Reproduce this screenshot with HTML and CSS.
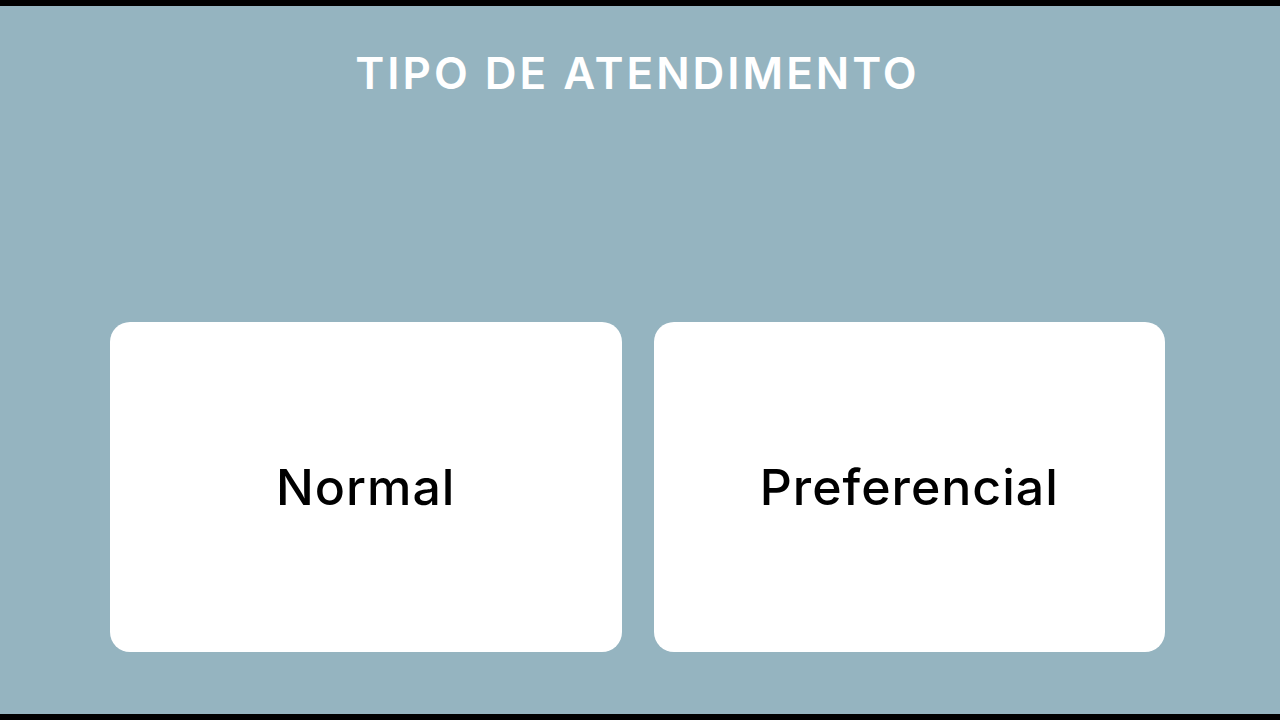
FILE: index.html
```html
<!DOCTYPE html>
<html lang="pt-BR">
<head>
<meta charset="utf-8">
<title>Tipo de atendimento</title>
<link rel="stylesheet" href="styles.css">
</head>
<body>
  <main class="screen">
    <h1 class="screen-title">TIPO DE ATENDIMENTO</h1>
    <div class="options">
      <button class="option-card" type="button">Normal</button>
      <button class="option-card" type="button">Preferencial</button>
    </div>
  </main>
</body>
</html>
```
FILE: styles.css
```css
* {
  box-sizing: border-box;
}

html,
body {
  margin: 0;
  height: 100%;
}

body {
  background: #000;
  padding: 6px 0;
  font-family: "Inter", "Noto Sans", sans-serif;
}

.screen {
  height: 100%;
  background: #95b4c0;
  display: flex;
  flex-direction: column;
  padding: 0 115px 62px 110px;
}

.screen-title {
  margin: 0;
  padding-top: 41px;
  text-align: center;
  color: #fff;
  font-size: 44px;
  font-weight: 600;
  line-height: 52px;
  letter-spacing: 3px;
}

.options {
  margin-top: auto;
  display: grid;
  grid-template-columns: 1fr 1fr;
  gap: 32px;
  height: 330px;
}

.option-card {
  border: none;
  border-radius: 20px;
  background: #fff;
  color: #000;
  font-family: inherit;
  font-size: 50px;
  font-weight: 500;
  letter-spacing: 1px;
  display: flex;
  align-items: center;
  justify-content: center;
  cursor: pointer;
}
```
